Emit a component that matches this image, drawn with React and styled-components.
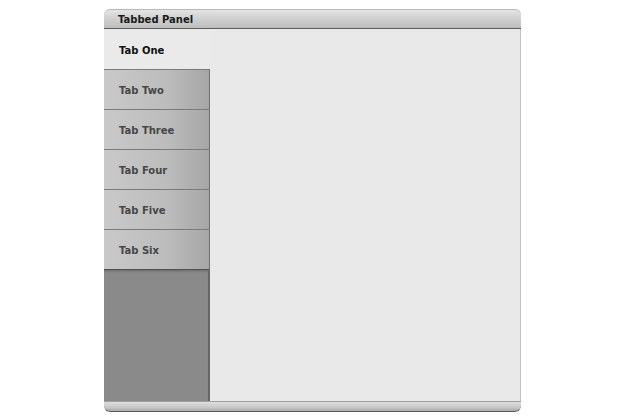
import React from 'react'
import styled, { createGlobalStyle } from 'styled-components'

const GlobalStyle = createGlobalStyle`
    body {
        margin: 0;
        background: #ffffff;
        font-family: "DejaVu Sans", Verdana, sans-serif;
    }
`

const Page = styled.div`
    width: 625px;
    height: 420px;
    padding: 9px 0 0 104px;
    box-sizing: border-box;
`

const Panel = styled.div`
    width: 417px;
    height: 403px;
    display: flex;
    flex-direction: column;
    border-radius: 6px;
    overflow: hidden;
    background: #e9e9e9;
    box-shadow: inset -1px 0 0 #c4c4c4, inset 1px 0 0 #d4d4d4;
`

const Header = styled.div`
    height: 18px;
    flex-shrink: 0;
    display: flex;
    align-items: center;
    padding-left: 14px;
    padding-top: 1px;
    box-sizing: border-box;
    font-size: 10px;
    font-weight: bold;
    color: #1a1a1a;
    background: linear-gradient(to bottom, #e4e4e4 0%, #cfcfcf 50%, #bdbdbd 100%);
    border-top: 1px solid #b8b8b8;
    border-bottom: 1px solid #5e5e5e;
    border-radius: 6px 6px 0 0;
    height: 20px;
`

const Body = styled.div`
    flex: 1;
    display: flex;
    min-height: 0;
`

const TabList = styled.div`
    width: 106px;
    display: flex;
    flex-direction: column;
    flex-shrink: 0;
`

const Tab = styled.div`
    height: 40px;
    flex-shrink: 0;
    display: flex;
    align-items: center;
    padding-left: 15px;
    padding-top: 2px;
    box-sizing: border-box;
    font-size: 10px;
    font-weight: bold;
    color: ${props => props.active ? '#111111' : '#474747'};
    background: ${props => props.active
        ? '#eaeaea'
        : 'linear-gradient(to right, #c9c9c9 0%, #bcbcbc 60%, #a6a6a6 100%)'};
    border-top: ${props => props.active ? 'none' : '1px solid #7a7a7a'};
    border-right: ${props => props.active ? 'none' : '1px solid #707070'};
    box-shadow: ${props => props.active ? 'none' : '1px 0 0 #f4f4f4'};
`

const TabFiller = styled.div`
    flex: 1;
    background: #8a8a8a;
    border-top: 1px solid #505050;
    border-right: 2px solid #666666;
    box-shadow: inset 0 3px 3px -2px rgba(0, 0, 0, 0.25), 1px 0 0 #f4f4f4;
`

const Content = styled.div`
    flex: 1;
    background: #e9e9e9;
    border-right: 1px solid #c2c2c2;
`

const Footer = styled.div`
    height: 9px;
    flex-shrink: 0;
    background: linear-gradient(to bottom, #dedede 0%, #c8c8c8 60%, #a9a9a9 100%);
    border-top: 1px solid #a0a0a0;
    border-bottom: 1px solid #5a5a5a;
    border-radius: 0 0 6px 6px;
`

const tabs = ['Tab One', 'Tab Two', 'Tab Three', 'Tab Four', 'Tab Five', 'Tab Six']

export default function App() {
    return (
        <>
            <GlobalStyle />
            <Page>
                <Panel>
                    <Header>Tabbed Panel</Header>
                    <Body>
                        <TabList>
                            {tabs.map((t, i) => (
                                <Tab key={t} active={i === 0}>{t}</Tab>
                            ))}
                            <TabFiller />
                        </TabList>
                        <Content />
                    </Body>
                    <Footer />
                </Panel>
            </Page>
        </>
    )
}
